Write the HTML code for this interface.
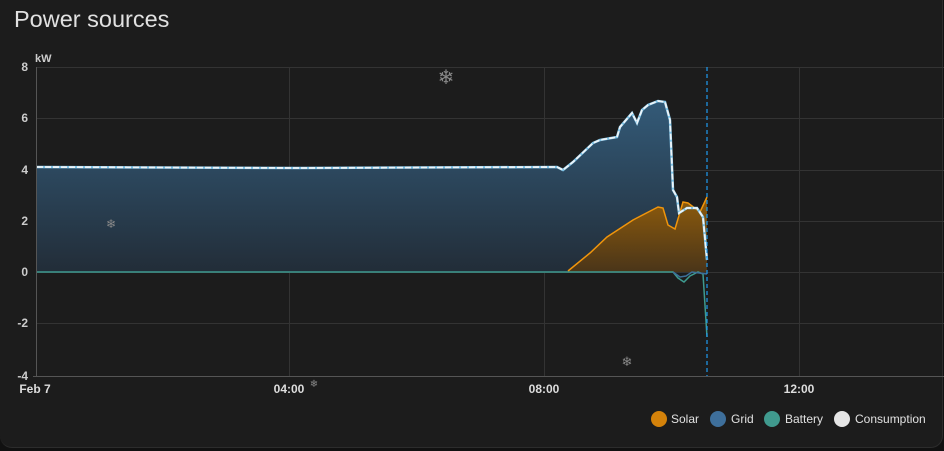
<!DOCTYPE html>
<html><head><style>
body{margin:0;background:#111;width:944px;height:451px;overflow:hidden;font-family:"Liberation Sans",sans-serif}
.card{position:absolute;left:0;top:0;width:942px;height:447px;background:#1c1c1c;border:1px solid #2c2c2c;border-top:none;border-left:none;border-radius:0 0 12px 12px}
.t{position:absolute;left:14px;top:6px;font-size:23.5px;color:#e1e1e1}
</style></head><body>
<div class="card"></div>
<div class="t">Power sources</div>
<svg width="944" height="451" style="position:absolute;left:0;top:0" font-family="Liberation Sans, sans-serif">
<defs>
<linearGradient id="gb" x1="0" y1="0" x2="0" y2="1"><stop offset="0" stop-color="#335a78"/><stop offset="1" stop-color="#222d38"/></linearGradient>
<linearGradient id="gs" x1="0" y1="0" x2="0" y2="1"><stop offset="0" stop-color="#8f5c0c"/><stop offset="1" stop-color="#4a3519"/></linearGradient>
</defs>
<g stroke="#333" stroke-width="1">
<line x1="37" y1="67.5" x2="944" y2="67.5"/><line x1="37" y1="118.5" x2="944" y2="118.5"/><line x1="37" y1="170.5" x2="944" y2="170.5"/><line x1="37" y1="221.5" x2="944" y2="221.5"/><line x1="37" y1="272.5" x2="944" y2="272.5"/><line x1="37" y1="323.5" x2="944" y2="323.5"/>
<line x1="289.5" y1="67" x2="289.5" y2="376"/><line x1="544.5" y1="67" x2="544.5" y2="376"/><line x1="799.5" y1="67" x2="799.5" y2="376"/>
</g>
<line x1="36.5" y1="67" x2="36.5" y2="377" stroke="#555"/>
<line x1="33" y1="376.5" x2="944" y2="376.5" stroke="#555"/>
<g fill="#ccc" font-size="12" font-weight="bold" text-anchor="end">
<text x="28" y="71">8</text><text x="28" y="122">6</text><text x="28" y="174">4</text><text x="28" y="225">2</text><text x="28" y="276">0</text><text x="28" y="327">-2</text><text x="28" y="380">-4</text>
</g>
<text x="35" y="62" fill="#ccc" font-size="11" font-weight="bold">kW</text>
<g fill="#ddd" font-size="12" font-weight="bold" text-anchor="middle">
<text x="35" y="393">Feb 7</text><text x="289" y="393">04:00</text><text x="544" y="393">08:00</text><text x="799" y="393">12:00</text>
</g>
<path d="M37,272 L37,167 L300,168 L557,167 L563,170 L573,162 L593,143 L600,140 L617,137 L620,127 L632,113 L637,123 L642,110 L648,105 L658,101 L665,102 L670,120 L673,190 L677,197 L679,272 Z" fill="url(#gb)"/>
<path d="M565,272 L568,271 L590,253 L607,237 L633,220 L658,207 L663,208 L668,225 L675,229 L683,202 L688,203 L700,212 L707,197 L707,272 Z" fill="url(#gs)"/>
<path d="M568,271 L590,253 L607,237 L633,220 L658,207 L663,208 L668,225 L675,229 L683,202 L688,203 L700,212 L707,197" fill="none" stroke="#f0950c" stroke-width="1.5"/>
<path d="M37,272 L673,272 L678,278 L684,282 L690,276 L698,272 L703,274 L707,337" fill="none" stroke="#3e9a8f" stroke-width="1.5"/>
<path d="M673,272 L680,277 L686,276 L692,272 L707,274" fill="none" stroke="#3d6f99" stroke-width="1.5"/>
<path d="M37,167 L300,168 L557,167 L563,170 L573,162 L593,143 L600,140 L617,137 L620,127 L632,113 L637,123 L642,110 L648,105 L658,101 L665,102 L670,120 L673,190 L677,197 L679,213 L687,208 L697,208 L703,217 L707,260" fill="none" stroke="#7fc4e8" stroke-width="2.5"/>
<path d="M37,167 L300,168 L557,167 L563,170 L573,162 L593,143 L600,140 L617,137 L620,127 L632,113 L637,123 L642,110 L648,105 L658,101 L665,102 L670,120 L673,190 L677,197 L679,213 L687,208 L697,208 L703,217 L707,260" fill="none" stroke="#eef4f8" stroke-width="1.8" stroke-dasharray="6,2"/>
<line x1="707" y1="67" x2="707" y2="376" stroke="#1e9bf0" stroke-width="1.2" stroke-dasharray="4,3"/>
<g fill="#888" text-anchor="middle">
<text x="446" y="84" font-size="20">❄</text>
<text x="111" y="228" font-size="12">❄</text>
<text x="627" y="366" font-size="13">❄</text>
<text x="314" y="387" font-size="10">❄</text>
</g>
<g font-size="12" fill="#e1e1e1">
<circle cx="659" cy="419" r="8" fill="#d4820a"/><text x="671" y="423">Solar</text>
<circle cx="718" cy="419" r="8" fill="#3e6f9b"/><text x="731" y="423">Grid</text>
<circle cx="772" cy="419" r="8" fill="#409a8e"/><text x="785" y="423">Battery</text>
<circle cx="842" cy="419" r="8" fill="#e6e6e6"/><text x="855" y="423">Consumption</text>
</g>
</svg>
</body></html>
